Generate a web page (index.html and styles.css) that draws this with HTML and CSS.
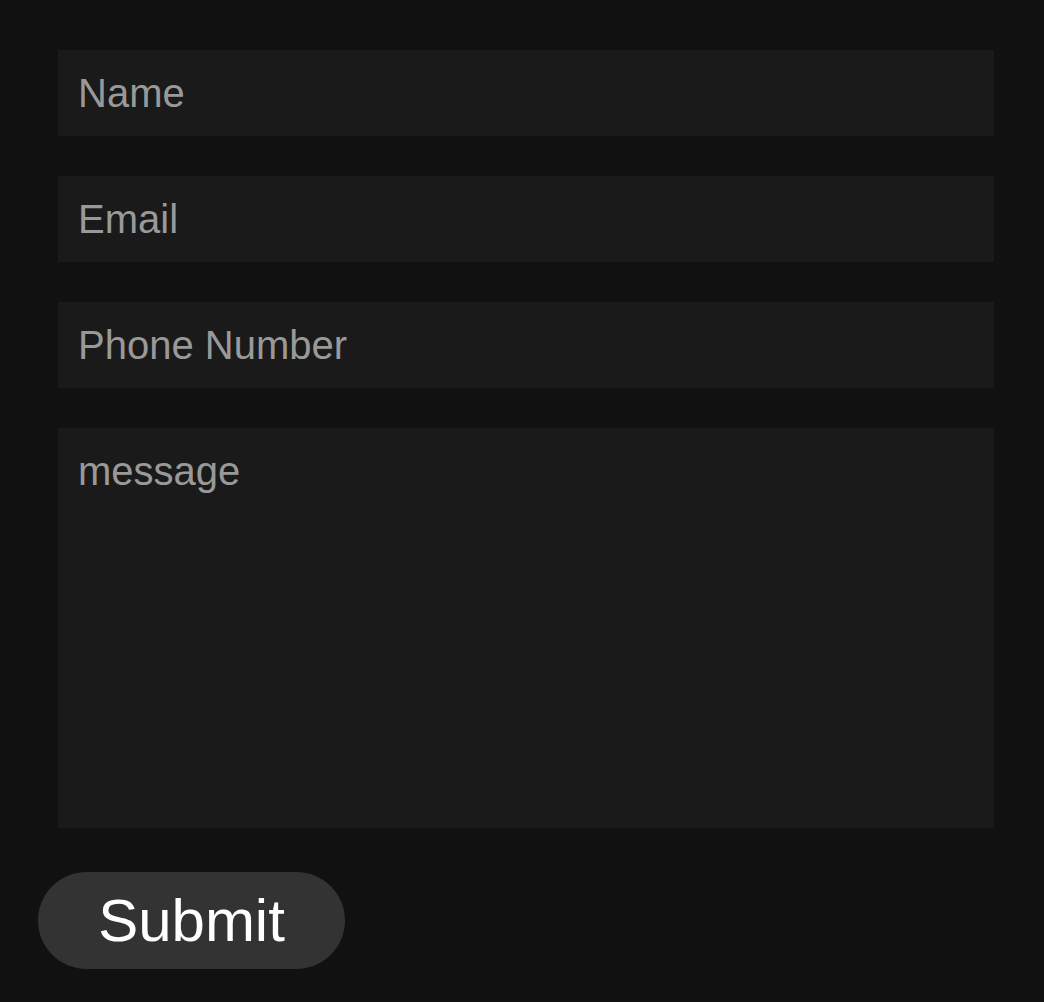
FILE: index.html
```html
<!DOCTYPE html>
<html lang="en">
<head>
<meta charset="utf-8">
<title>Contact</title>
<link rel="stylesheet" href="styles.css">
</head>
<body>
<form class="contact-form">
  <input class="field" type="text" placeholder="Name">
  <input class="field" type="email" placeholder="Email">
  <input class="field" type="tel" placeholder="Phone Number">
  <textarea class="field field-message" placeholder="message"></textarea>
  <button class="submit" type="button">Submit</button>
</form>
</body>
</html>
```
FILE: styles.css
```css
html, body {
  margin: 0;
  padding: 0;
  background: #111111;
}
body {
  font-family: "Liberation Sans", Arial, sans-serif;
}
.contact-form {
  display: flex;
  flex-direction: column;
  align-items: flex-start;
  gap: 40px;
  padding: 50px 50px 0 58px;
}
.field {
  box-sizing: border-box;
  width: 100%;
  height: 86px;
  margin: 0;
  padding: 20px 20px;
  border: none;
  outline: none;
  background: #1a1a1a;
  color: #cccccc;
  font-family: "Liberation Sans", Arial, sans-serif;
  font-size: 40px;
  line-height: 46px;
}
.field::placeholder {
  color: #999999;
  opacity: 1;
}
.field-message {
  height: 400px;
  resize: none;
  display: block;
}
.submit {
  box-sizing: border-box;
  margin: 4px 0 0 -20px;
  width: 307px;
  height: 97px;
  padding: 0;
  border: none;
  border-radius: 49px;
  background: #333333;
  color: #ffffff;
  font-family: "Liberation Sans", Arial, sans-serif;
  font-size: 60px;
  line-height: 67px;
  cursor: pointer;
}
```
